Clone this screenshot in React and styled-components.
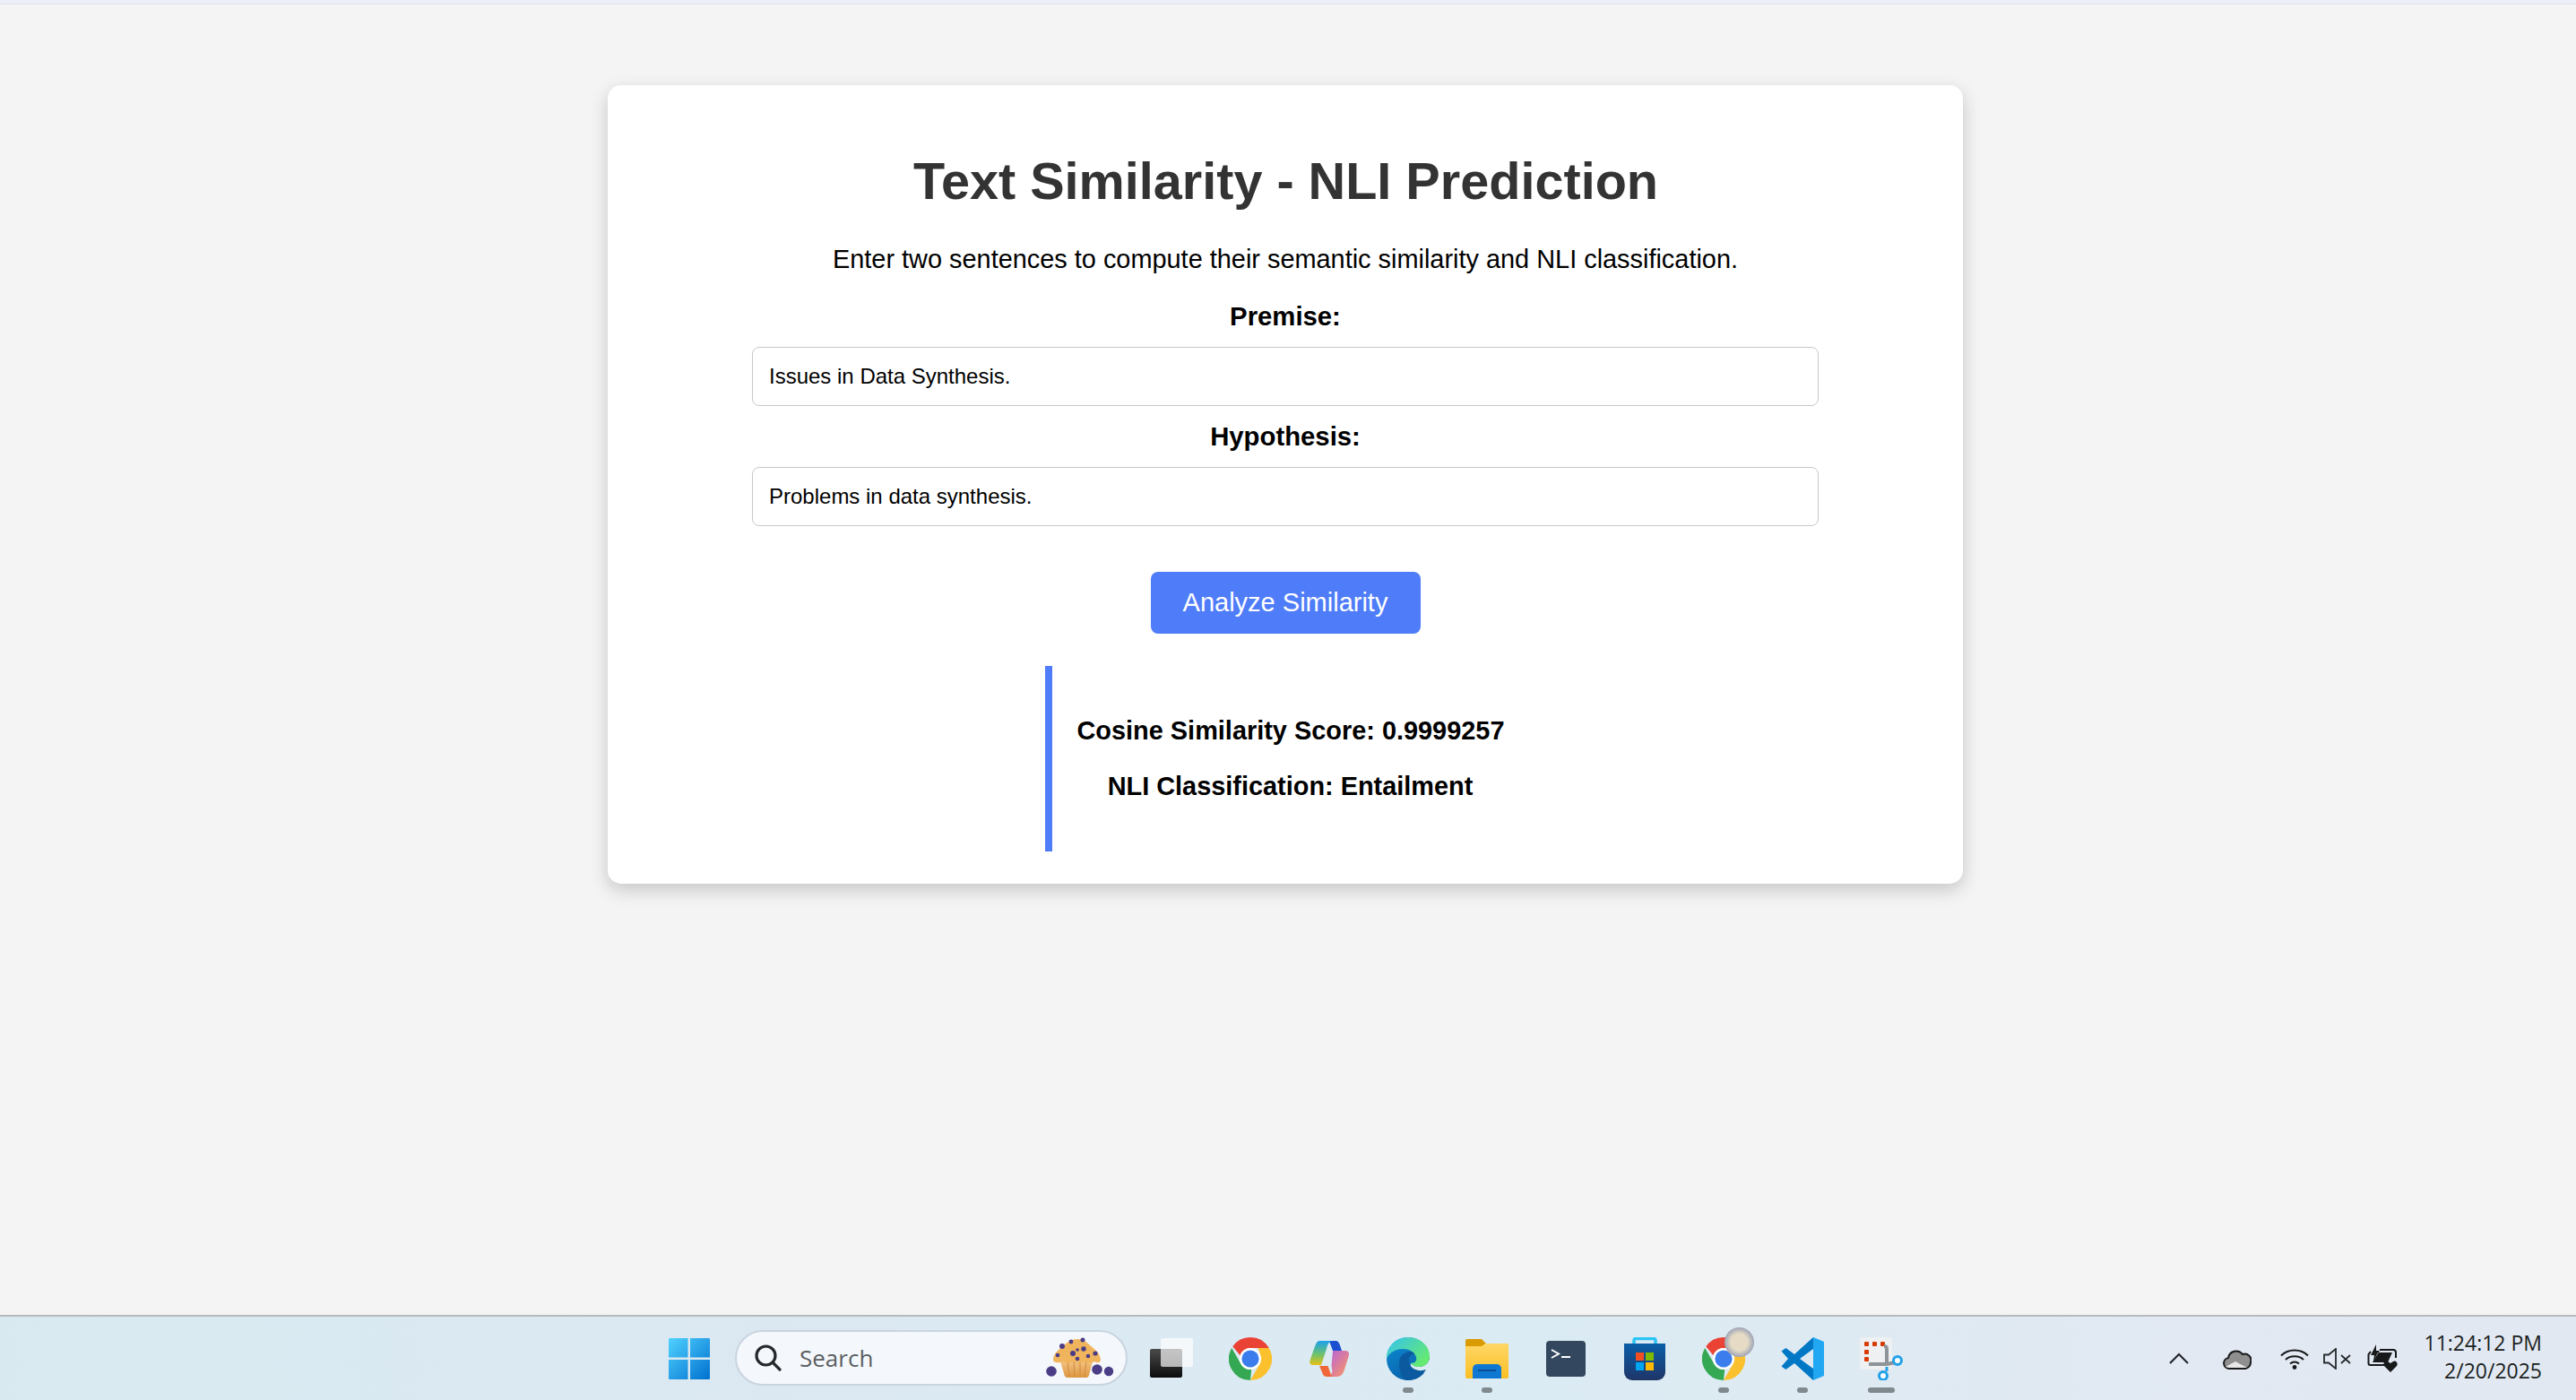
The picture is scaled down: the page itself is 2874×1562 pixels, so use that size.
import React from "react";
import styled, { createGlobalStyle } from "styled-components";

const GlobalStyle = createGlobalStyle`
  html, body {
    margin: 0;
    padding: 0;
    height: 100%;
    background: #f4f4f4;
  }
  * { box-sizing: border-box; }
`;

const Screen = styled.div`
  height: 1562px;
  display: flex;
  flex-direction: column;
  overflow: hidden;
  font-family: "Liberation Sans", Arial, sans-serif;
`;

const BrowserEdge = styled.div`
  height: 5px;
  flex: none;
  background: linear-gradient(#eef0f9 60%, #dfe2ea);
`;

const Page = styled.main`
  flex: 1;
  display: flex;
  justify-content: center;
  align-items: flex-start;
  padding: 90px 6px 0 0;
`;

const Card = styled.section`
  width: 1512px;
  height: 891px;
  padding: 64px 162px 36px;
  display: flex;
  flex-direction: column;
  align-items: center;
  background: #fff;
  border-radius: 15px;
  box-shadow: 0 7px 20px rgba(0, 0, 0, 0.19);
`;

const Title = styled.h1`
  margin: 0 0 0 1px;
  font-size: 57.6px;
  line-height: 86px;
  font-weight: 700;
  color: #333;
  white-space: nowrap;
`;

const Intro = styled.p`
  margin: 27px 0 0;
  font-size: 28.9px;
  line-height: 34px;
  color: #000;
  white-space: nowrap;
`;

const Label = styled.label`
  display: block;
  margin-top: ${(p) => p.$top}px;
  font-size: 29.3px;
  line-height: 34px;
  font-weight: 700;
  color: #000;
`;

const TextInput = styled.input`
  display: block;
  width: 1190px;
  height: 66px;
  margin-top: 17px;
  padding: 0 18px;
  border: 1px solid #c8c8c8;
  border-radius: 8px;
  background: #fff;
  font-family: inherit;
  font-size: 24px;
  color: #000;
  outline: none;
`;

const AnalyzeButton = styled.button`
  width: 301px;
  height: 69px;
  margin-top: 51px;
  border: 0;
  border-radius: 8px;
  background: #4f7cf8;
  color: #fff;
  font-family: inherit;
  font-size: 29px;
`;

const Result = styled.div`
  width: 540px;
  margin: 36px 0 0 3px;
  padding: 28px;
  border-left: 8px solid #4f7cf8;
  text-align: center;
`;

const ResultLine = styled.p`
  margin: 27px 0;
  font-size: 28.9px;
  line-height: 35px;
  font-weight: 700;
  color: #000;
  white-space: nowrap;
`;

const Taskbar = styled.footer`
  height: 95px;
  flex: none;
  display: flex;
  align-items: center;
  padding-left: 725px;
  border-top: 2px solid #b6babd;
  background: linear-gradient(90deg, #d8eaf0 0%, #dbe8f2 30%, #dbebf3 60%, #e2e9f2 85%, #e1e8f1 100%);
`;

const Slot = styled.div`
  position: relative;
  width: 88px;
  height: 91px;
  flex: none;
  display: flex;
  align-items: center;
  justify-content: center;
`;

const RunDot = styled.span`
  position: absolute;
  left: 50%;
  bottom: 7px;
  width: ${(p) => (p.$wide ? 30 : 12)}px;
  height: 6px;
  transform: translateX(-50%);
  border-radius: 3px;
  background: #7f898e;
`;

const SearchBox = styled.div`
  width: 438px;
  height: 62px;
  flex: none;
  margin: -2px 5px 0 7px;
  padding: 0 13px 0 20px;
  display: flex;
  align-items: center;
  border: 2px solid #c9d4df;
  border-radius: 31px;
  background: #f4f8fc;
`;

const SearchText = styled.span`
  margin-left: 20px;
  flex: 1;
  font-family: "Open Sans", "Noto Sans", sans-serif;
  font-size: 26px;
  color: #5b5f63;
`;

const Tray = styled.div`
  margin-left: auto;
  padding-right: 38px;
  display: flex;
  align-items: center;
`;

const TrayIcon = styled.span`
  display: flex;
  margin-right: ${(p) => p.$gap}px;
`;

const Clock = styled.div`
  margin: -4px 0 0 30px;
  text-align: right;
  font-family: "Open Sans", "Noto Sans", sans-serif;
  font-size: 23px;
  line-height: 31px;
  color: #1c1f22;
  white-space: nowrap;
`;

function WindowsIcon() {
  return (
    <svg width="46" height="46" viewBox="0 0 46 46">
      <defs>
        <linearGradient id="win" x1="0" y1="0" x2="1" y2="1">
          <stop offset="0" stopColor="#50d2ff" />
          <stop offset="1" stopColor="#0070cf" />
        </linearGradient>
      </defs>
      <path fill="url(#win)" d="M1 0h20.5v21.5H0V1a1 1 0 0 1 1-1zM24 0h21a1 1 0 0 1 1 1v20.5H24zM0 24h21.5v22H1a1 1 0 0 1-1-1zM24 24h22v21a1 1 0 0 1-1 1H24z" />
    </svg>
  );
}

function SearchIcon() {
  return (
    <svg width="30" height="30" viewBox="0 0 30 30" fill="none" stroke="#26292c" strokeWidth="3.2" strokeLinecap="round">
      <circle cx="12.5" cy="12.5" r="10.5" />
      <path d="M20.5 20.5 28 28" />
    </svg>
  );
}

function MuffinIcon() {
  return (
    <svg width="76" height="46" viewBox="0 0 76 46">
      <defs>
        <linearGradient id="cup" x1="0" y1="0" x2="0" y2="1">
          <stop offset="0" stopColor="#f6c98a" />
          <stop offset="1" stopColor="#dd9642" />
        </linearGradient>
      </defs>
      <path fill="url(#cup)" d="M15 24h38l-5 18q-.5 3-3 3H24q-3 0-3.500-3z" />
      <path stroke="#cf8a3a" strokeWidth="1" d="M24 26l2 18M31 26l1 18M38 26v18M45 26l-2 18" />
      <path fill="#f0b45c" d="M8 25c0-8 8-12 13-17 8-8 20-8 27 0 5 5 12 8 13 17 0 4-4 4-7 2-4 3-8 1-10 0-5 2-10 2-14 0-4 2-8 2-11 0-4 2-11 2-11-2z" />
      <g fill="#4a3d86">
        <circle cx="18" cy="10" r="3" /><circle cx="28" cy="5" r="2.400" /><circle cx="41" cy="3" r="2.500" />
        <circle cx="42" cy="13" r="2.700" /><circle cx="30" cy="18" r="3" /><circle cx="35" cy="14" r="1.800" />
        <circle cx="13" cy="20" r="2.300" /><circle cx="47" cy="21" r="2.300" /><circle cx="55" cy="18" r="2.600" /><circle cx="35" cy="24" r="2.300" />
        <circle cx="6" cy="38" r="5.800" /><circle cx="57" cy="36" r="5.800" /><circle cx="70" cy="38" r="5.200" />
      </g>
    </svg>
  );
}

function TaskViewIcon() {
  return (
    <svg width="48" height="46" viewBox="0 0 48 46">
      <defs>
        <linearGradient id="tvBack" x1="0" y1="0" x2="0" y2="1">
          <stop offset="0" stopColor="#4b4b4b" />
          <stop offset="1" stopColor="#0c0c0c" />
        </linearGradient>
      </defs>
      <rect x="0" y="12" width="36" height="32" rx="2" fill="url(#tvBack)" />
      <rect x="12" y="0" width="36" height="32" rx="2" fill="#fff" fillOpacity="0.68" />
    </svg>
  );
}

function ChromeIcon() {
  return (
    <svg width="48" height="48" viewBox="0 0 48 48">
      <path fill="#ea4335" d="M24 0a24 24 0 0 1 20.800 12H24a12 12 0 0 0-11.400 8.300L4.300 10.200A24 24 0 0 1 24 0z" />
      <path fill="#34a853" d="M3.200 12 13.600 30a12 12 0 0 0 11.600 6L24 48A24 24 0 0 1 3.200 12z" />
      <path fill="#fbc02d" d="M44.800 12A24 24 0 0 1 24 48l10.400-18a12 12 0 0 0 0-12 12 12 0 0 0-2-6z" />
      <circle cx="24" cy="24" r="12" fill="#fff" />
      <circle cx="24" cy="24" r="9.600" fill="#3b7ded" />
    </svg>
  );
}

function CopilotIcon() {
  return (
    <svg width="44" height="40" viewBox="0 0 44 40">
      <defs>
        <linearGradient id="copL" x1="0" y1="0" x2="0" y2="1">
          <stop offset="0" stopColor="#1ba0ee" />
          <stop offset="0.55" stopColor="#6cc26e" />
          <stop offset="1" stopColor="#e8c016" />
        </linearGradient>
        <linearGradient id="copR" x1="0" y1="0" x2="1" y2="1">
          <stop offset="0" stopColor="#b45fe0" />
          <stop offset="1" stopColor="#ff9a5e" />
        </linearGradient>
      </defs>
      <path fill="#1a4fd0" d="M23 0h6c3 0 4 2 5 5l2 6H26l-3-8c-.3-1-.7-2-2-3z" />
      <path fill="url(#copR)" d="M26 11h14c3 0 4.500 2 4 5l-5 16c-1.500 5-4 8-9 8H20c3-.5 4.500-3 5.500-6l-1-6z" />
      <path fill="url(#copL)" d="M11 0h14c-4 1-5 5-6 9l-6 18H4c-3 0-4.500-2-3.500-5L6 6c1.500-4 3-6 5-6z" />
      <path fill="#f0683a" d="M11 28h9.500l2.500 7c.5 2 1 4 3 5h-6c-3 0-5-1-6-5z" />
    </svg>
  );
}

function EdgeIcon() {
  return (
    <svg width="48" height="48" viewBox="0 0 48 48">
      <defs>
        <linearGradient id="edgeTop" x1="0" y1="0" x2="1" y2="0.700">
          <stop offset="0" stopColor="#35c1f1" />
          <stop offset="1" stopColor="#66eb6e" />
        </linearGradient>
        <linearGradient id="edgeBody" x1="0" y1="0" x2="0.600" y2="1">
          <stop offset="0" stopColor="#0c8fd6" />
          <stop offset="1" stopColor="#0a5fa8" />
        </linearGradient>
      </defs>
      <circle cx="24" cy="24" r="24" fill="url(#edgeBody)" />
      <path fill="#dbebf3" d="M27 29c3 3 6 4 9 4 5 0 10-3 12-9 .5 5-.5 9-3 13l-2 3H26z" />
      <path fill="#0b5a9f" d="M14 29c0-8 6-13 13-13 3 0 5 1 6 3-4-1-9 2-8 8 1 9 11 12 19 9-4 7-11 12-20 12-1 0-3 0-4-1-4-4-6-12-6-18z" />
      <path fill="url(#edgeTop)" d="M0 24C0 10 10 0 24 0c14 0 24 10 24 21 0 8-6 12-12 12-4 0-8-2-9-4 5 0 7-3 6-7-2-6-8-9-15-9C10 13 3 17 0 24z" />
    </svg>
  );
}

function FolderIcon() {
  return (
    <svg width="48" height="44" viewBox="0 0 48 44">
      <defs>
        <linearGradient id="folder" x1="0" y1="0" x2="0" y2="1">
          <stop offset="0" stopColor="#ffd766" />
          <stop offset="1" stopColor="#fbbf24" />
        </linearGradient>
      </defs>
      <path fill="#d99b00" d="M2 0h16l5 5h23a2 2 0 0 1 2 2v6H0V2a2 2 0 0 1 2-2z" />
      <path fill="url(#folder)" d="M0 8h18l4-3h24a2 2 0 0 1 2 2v35a2 2 0 0 1-2 2H2a2 2 0 0 1-2-2z" />
      <path fill="#0f78d2" d="M8 44V33a5 5 0 0 1 5-5h22a5 5 0 0 1 5 5v11z" />
      <rect x="14" y="34" width="20" height="2" fill="#0a4f94" />
    </svg>
  );
}

function TerminalIcon() {
  return (
    <svg width="44" height="40" viewBox="0 0 44 40">
      <rect width="44" height="40" rx="4" fill="#33475e" />
      <path d="M6 10l8 4.500-8 4.500" fill="none" stroke="#fff" strokeWidth="2" />
      <path d="M17 18h10" stroke="#fff" strokeWidth="2" />
    </svg>
  );
}

function StoreIcon() {
  return (
    <svg width="46" height="48" viewBox="0 0 46 48">
      <defs>
        <linearGradient id="bag" x1="0" y1="0" x2="0" y2="1">
          <stop offset="0" stopColor="#0a5ea8" />
          <stop offset="1" stopColor="#1f3568" />
        </linearGradient>
      </defs>
      <path fill="none" stroke="#2ac4f5" strokeWidth="3.500" d="M11 11V3.500q0-2 2-2h20q2 0 2 2V11" />
      <path fill="url(#bag)" d="M0 7h46v32a9 9 0 0 1-9 9H9a9 9 0 0 1-9-9z" />
      <rect x="13" y="17" width="9" height="9" fill="#f25022" />
      <rect x="24" y="17" width="9" height="9" fill="#7fba00" />
      <rect x="13" y="28" width="9" height="9" fill="#00a4ef" />
      <rect x="24" y="28" width="9" height="9" fill="#ffb900" />
    </svg>
  );
}

function VsCodeIcon() {
  return (
    <svg width="48" height="48" viewBox="0 0 48 48">
      <path fill="#0078c6" d="M36 0 15 19 5.500 12 .5 15.500 8 24 .5 32.500l5 3.500L15 29l21 19 4-24-4-24zM36 13v22L21 24z" fillRule="evenodd" />
      <path fill="#22a7f2" d="M36 0l12 5v38l-12 5z" />
    </svg>
  );
}

function SnipIcon() {
  return (
    <svg width="48" height="48" viewBox="0 0 48 48">
      <rect x="0" y="0" width="36" height="36" rx="3" fill="#eef0f2" />
      <g fill="#d83b01">
        <rect x="5" y="5" width="5" height="5" rx="1" /><rect x="14" y="5" width="5" height="5" rx="1" /><rect x="23" y="5" width="5" height="5" rx="1" />
        <rect x="5" y="14" width="5" height="5" rx="1" /><rect x="5" y="22" width="5" height="5" rx="1" />
      </g>
      <path d="M27 10q3 0 3 3v18M10 30h18q3 0 7-1l5-1" fill="none" stroke="#8f9498" strokeWidth="4" />
      <circle cx="42" cy="26" r="4.500" fill="#fff" stroke="#22a0e8" strokeWidth="3" />
      <circle cx="26" cy="43" r="4.500" fill="#fff" stroke="#22a0e8" strokeWidth="3" />
      <path d="M30 33v5" stroke="#22a0e8" strokeWidth="3" />
    </svg>
  );
}

const ThumbBadge = styled.span`
  position: absolute;
  left: 45px;
  top: 11px;
  width: 33px;
  height: 33px;
  border-radius: 50%;
  background: radial-gradient(circle, #e6dcc6 40%, #8d96b2 78%);
`;

function Chevron() {
  return (
    <svg width="22" height="14" viewBox="0 0 22 14" fill="none" stroke="#1f2226" strokeWidth="2">
      <path d="M1 12 11 2l10 10" />
    </svg>
  );
}

function CloudIcon() {
  return (
    <svg width="32" height="24" viewBox="0 0 32 24">
      <path fill="#8f8f8f" stroke="#17191b" strokeWidth="2" d="M7 23a6 6 0 0 1-1-11.900A9 9 0 0 1 22 7a7 7 0 0 1 9 9 7 7 0 0 1-6 7z" />
      <path fill="#e8e8e8" d="M3 21l11-6 13 7H7z" />
    </svg>
  );
}

function WifiIcon() {
  return (
    <svg width="32" height="24" viewBox="0 0 32 24" fill="none" stroke="#17191b" strokeWidth="2">
      <path d="M1 8.500c8-8 22-8 30 0M6 13c5-5 15-5 20 0M11 17.500c3-2.500 7-2.500 10 0" />
      <circle cx="16" cy="21.500" r="2.400" fill="#17191b" stroke="none" />
    </svg>
  );
}

function MuteIcon() {
  return (
    <svg width="32" height="24" viewBox="0 0 32 24" fill="none" stroke="#26292c" strokeWidth="1.800">
      <path d="M1 7.500h5L14 1v22l-8-6.500H1z" />
      <path d="M20 8l10 9M30 8l-10 9" />
    </svg>
  );
}

function BatteryIcon() {
  return (
    <svg width="34" height="32" viewBox="0 0 34 32">
      <path fill="none" stroke="#17191b" strokeWidth="2" d="M4 8 1.500 11v10q0 2 2 2h18M14 6h15q3 0 3 3v6" />
      <path fill="#17191b" d="M10 0 4 12h4l-1 6 7-11h-4zM12 9h16l-5 11H6z" />
      <path fill="#17191b" d="M26 31l-7-7c-2-3 1-7 4-5l3 2 3-2c3-2 6 2 4 5z" />
    </svg>
  );
}

const taskIcons = [
  { key: "task", icon: <TaskViewIcon /> },
  { key: "chrome", icon: <ChromeIcon /> },
  { key: "copilot", icon: <CopilotIcon /> },
  { key: "edge", icon: <EdgeIcon />, running: true },
  { key: "files", icon: <FolderIcon />, running: true },
  { key: "terminal", icon: <TerminalIcon /> },
  { key: "store", icon: <StoreIcon /> },
  { key: "chrome2", icon: <ChromeIcon />, running: true, badge: true },
  { key: "code", icon: <VsCodeIcon />, running: true },
  { key: "snip", icon: <SnipIcon />, running: true, wide: true },
];

export default function App() {
  return (
    <Screen>
      <GlobalStyle />
      <BrowserEdge />
      <Page>
        <Card>
          <Title>Text Similarity - NLI Prediction</Title>
          <Intro>Enter two sentences to compute their semantic similarity and NLI classification.</Intro>
          <Label $top={30}>Premise:</Label>
          <TextInput readOnly value="Issues in Data Synthesis." />
          <Label $top={17}>Hypothesis:</Label>
          <TextInput readOnly value="Problems in data synthesis." />
          <AnalyzeButton>Analyze Similarity</AnalyzeButton>
          <Result>
            <ResultLine>Cosine Similarity Score: 0.9999257</ResultLine>
            <ResultLine>NLI Classification: Entailment</ResultLine>
          </Result>
        </Card>
      </Page>
      <Taskbar>
        <Slot>
          <WindowsIcon />
        </Slot>
        <SearchBox>
          <SearchIcon />
          <SearchText>Search</SearchText>
          <MuffinIcon />
        </SearchBox>
        {taskIcons.map((t) => (
          <Slot key={t.key}>
            {t.icon}
            {t.badge && <ThumbBadge />}
            {t.running && <RunDot $wide={t.wide} />}
          </Slot>
        ))}
        <Tray>
          <TrayIcon $gap={38}>
            <Chevron />
          </TrayIcon>
          <TrayIcon $gap={32}>
            <CloudIcon />
          </TrayIcon>
          <TrayIcon $gap={16}>
            <WifiIcon />
          </TrayIcon>
          <TrayIcon $gap={17}>
            <MuteIcon />
          </TrayIcon>
          <TrayIcon $gap={0}>
            <BatteryIcon />
          </TrayIcon>
          <Clock>
            11:24:12 PM
            <br />
            2/20/2025
          </Clock>
        </Tray>
      </Taskbar>
    </Screen>
  );
}
